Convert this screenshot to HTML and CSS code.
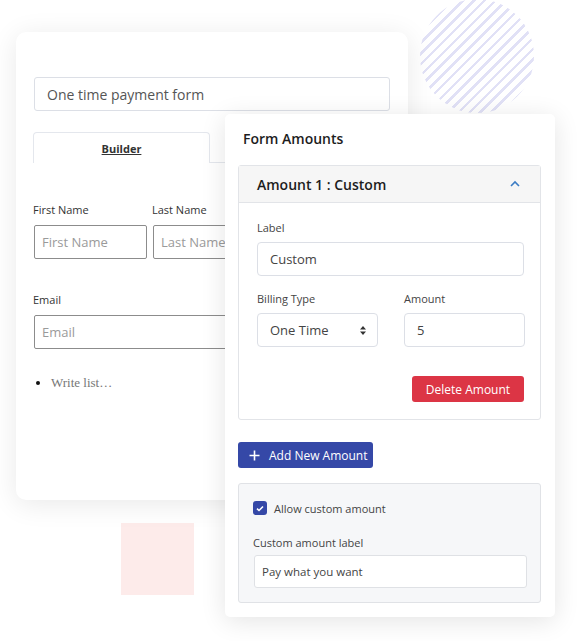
FILE: index.html
```html
<!DOCTYPE html>
<html>
<head>
<meta charset="utf-8">
<link rel="stylesheet" href="styles.css">
</head>
<body>
<div class="stage">
  <div class="deco-circle"></div>
  <div class="deco-square"></div>

  <div class="builder-card">
    <div class="title-input">One time payment form</div>
    <div class="tabs">
      <div class="tab"><span>Builder</span></div>
    </div>
    <div class="name-row">
      <div class="field">
        <div class="field-label">First Name</div>
        <div class="box-input">First Name</div>
      </div>
      <div class="field">
        <div class="field-label">Last Name</div>
        <div class="box-input">Last Name</div>
      </div>
    </div>
    <div class="field email-field">
      <div class="field-label">Email</div>
      <div class="box-input wide">Email</div>
    </div>
    <ul class="list-block">
      <li><span>Write list…</span></li>
    </ul>
  </div>

  <div class="amounts-card">
    <div class="card-title">Form Amounts</div>
    <div class="amount-panel">
      <div class="panel-head">
        <span>Amount 1 : Custom</span>
        <svg class="chev" width="10" height="7" viewBox="0 0 10 7"><path d="M1 6 L5 2 L9 6" fill="none" stroke="#3b7cc4" stroke-width="1.6"/></svg>
      </div>
      <div class="panel-body">
        <div class="p-label">Label</div>
        <div class="p-input">Custom</div>
        <div class="p-row">
          <div class="p-col">
            <div class="p-label">Billing Type</div>
            <div class="p-input select">
              <span>One Time</span>
              <svg width="8" height="11" viewBox="0 0 8 11"><path d="M4 1 L7 4.5 H1 Z M4 10 L7 6.5 H1 Z" fill="#333"/></svg>
            </div>
          </div>
          <div class="p-col">
            <div class="p-label">Amount</div>
            <div class="p-input">5</div>
          </div>
        </div>
        <div class="actions">
          <div class="btn-danger">Delete Amount</div>
        </div>
      </div>
    </div>
    <div class="btn-primary">
      <svg width="11" height="11" viewBox="0 0 11 11"><path d="M5.5 0.5 V10.5 M0.5 5.5 H10.5" stroke="#fff" stroke-width="1.6"/></svg>
      <span>Add New Amount</span>
    </div>
    <div class="custom-box">
      <div class="check-row">
        <span class="checkbox"><svg width="8" height="7" viewBox="0 0 8 7"><path d="M1 3.6 L3 5.5 L7 1.5" fill="none" stroke="#fff" stroke-width="1.6"/></svg></span>
        <span>Allow custom amount</span>
      </div>
      <div class="c-label">Custom amount label</div>
      <div class="c-input">Pay what you want</div>
    </div>
  </div>
</div>
</body>
</html>
```

FILE: styles.css
```css
* { box-sizing: border-box; }
html, body { margin: 0; padding: 0; background: #fff; }
body { font-family: "Open Sans", "Noto Sans", sans-serif; color: #333; }

.stage {
  position: relative;
  width: 579px;
  height: 641px;
  overflow: hidden;
  padding: 32px 0 0 16px;
}

.deco-circle {
  position: absolute;
  left: 420px;
  top: -1px;
  width: 114px;
  height: 114px;
  border-radius: 50%;
  background: repeating-linear-gradient(135deg, #e1e1f6 0 2.4px, transparent 2.4px 7.6px);
}

.deco-square {
  position: absolute;
  left: 121px;
  top: 523px;
  width: 73px;
  height: 72px;
  background: #fdebea;
}

.builder-card {
  position: relative;
  width: 392px;
  height: 468px;
  padding: 45px 18px 0 18px;
  background: #fff;
  border-radius: 10px;
  box-shadow: 0 4px 28px rgba(0,0,0,0.09);
}

.title-input {
  height: 34px;
  border: 1px solid #dcdfe6;
  border-radius: 3px;
  padding-left: 12px;
  display: flex;
  align-items: center;
  font-size: 14px;
  color: #555;
}

.tabs {
  margin-top: 21px;
  margin-left: -1px;
  display: flex;
  border-bottom: 1px solid #e4e7ed;
}
.tab {
  width: 177px;
  height: 31px;
  margin-bottom: -1px;
  border: 1px solid #e4e7ed;
  border-bottom: none;
  border-radius: 4px 4px 0 0;
  background: #fff;
  display: flex;
  align-items: center;
  justify-content: center;
  font-size: 11px;
  font-weight: 700;
  color: #333;
  text-decoration: underline;
}

.name-row {
  margin-top: 39px;
  display: grid;
  grid-template-columns: 113px 113px;
  column-gap: 6px;
}
.field-label {
  font-size: 11px;
  line-height: 16px;
  height: 16px;
  color: #333;
  margin-left: -1px;
}
.box-input {
  margin-top: 7px;
  height: 34px;
  border: 1px solid #8c8c8c;
  border-radius: 2px;
  padding-left: 7px;
  display: flex;
  align-items: center;
  font-size: 13px;
  color: #9a9a9a;
  white-space: nowrap;
  overflow: hidden;
}
.email-field { margin-top: 33px; }
.box-input.wide { width: 356px; }

.list-block {
  margin: 26px 0 0 0;
  padding-left: 17px;
  font-family: "Liberation Serif", "Times New Roman", serif;
  font-size: 13px;
  color: #111;
}
.list-block span { color: #777; }

.amounts-card {
  position: absolute;
  left: 225px;
  top: 114px;
  width: 330px;
  height: 503px;
  padding: 15px 14px 14px 13px;
  background: #fff;
  border-radius: 5px;
  box-shadow: 0 4px 26px rgba(0,0,0,0.11);
}
.card-title {
  padding-left: 5px;
  font-size: 14px;
  line-height: 20px;
  font-weight: 600;
  color: #1d1d1d;
}

.amount-panel {
  margin-top: 16px;
  border: 1px solid #e2e4e8;
  border-radius: 3px;
}
.panel-head {
  height: 37px;
  padding: 0 20px 0 18px;
  background: #f6f6f6;
  border-bottom: 1px solid #e2e4e8;
  display: flex;
  align-items: center;
  justify-content: space-between;
  font-size: 14px;
  font-weight: 600;
  color: #1d1d1d;
}
.chev { display: block; margin-bottom: 2px; }

.panel-body { padding: 17px 16px 17px 18px; }
.p-label {
  font-size: 11px;
  line-height: 16px;
  color: #444;
}
.p-input {
  margin-top: 6px;
  height: 34px;
  border: 1px solid #dcdfe6;
  border-radius: 4px;
  padding: 0 12px;
  display: flex;
  align-items: center;
  font-size: 13px;
  color: #444;
}
.p-input.select { justify-content: space-between; padding-right: 10px; }
.p-row {
  margin-top: 15px;
  display: grid;
  grid-template-columns: 121px 121px;
  column-gap: 26px;
}
.actions {
  margin-top: 29px;
  display: flex;
  justify-content: flex-end;
}
.btn-danger {
  width: 112px;
  height: 26px;
  background: #dc3545;
  border-radius: 3px;
  color: #fff;
  font-size: 12px;
  display: flex;
  align-items: center;
  justify-content: center;
}

.btn-primary {
  margin-top: 22px;
  width: 135px;
  height: 26px;
  background: #3548a7;
  border-radius: 3px;
  color: #fff;
  font-size: 12px;
  font-weight: 500;
  display: flex;
  align-items: center;
  gap: 9px;
  padding-left: 11px;
}
.btn-primary svg { display: block; }

.custom-box {
  margin-top: 15px;
  background: #f6f7f9;
  border: 1px solid #e0e2e6;
  border-radius: 3px;
  padding: 16px 13px 14px 14px;
}
.check-row {
  height: 16px;
  display: flex;
  align-items: center;
  gap: 7px;
  font-size: 11px;
  color: #444;
}
.checkbox {
  width: 14px;
  height: 14px;
  border-radius: 3px;
  background: #3548a7;
  display: flex;
  align-items: center;
  justify-content: center;
}
.checkbox svg { display: block; }
.c-label {
  margin-top: 19px;
  font-size: 11px;
  line-height: 16px;
  color: #444;
}
.c-input {
  margin-top: 4px;
  margin-left: 1px;
  height: 33px;
  background: #fff;
  border: 1px solid #dfe1e5;
  border-radius: 3px;
  padding-left: 7px;
  display: flex;
  align-items: center;
  font-size: 11.5px;
  color: #444;
}
```
